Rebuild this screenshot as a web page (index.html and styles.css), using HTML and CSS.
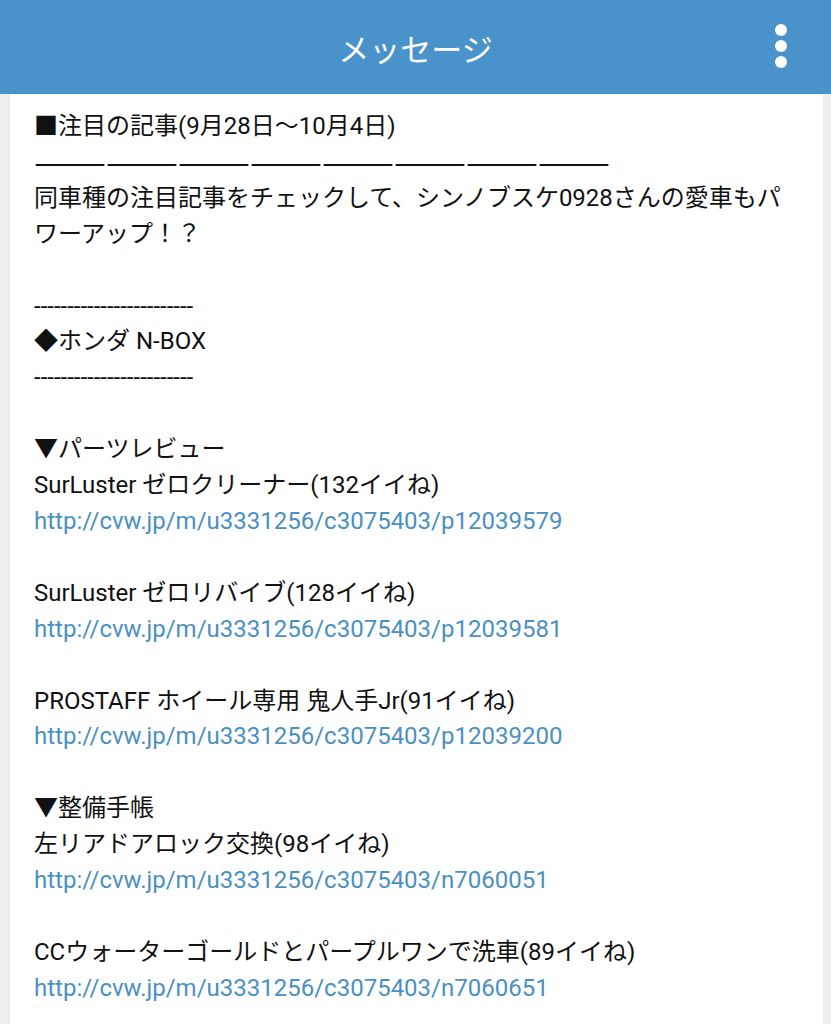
FILE: index.html
```html
<!DOCTYPE html>
<html>
<head>
  <meta charset="utf-8">
  <title>メッセージ</title>
  <link rel="stylesheet" href="styles.css">
</head>
<body>
  <div class="header">
    <h1 class="title">メッセージ</h1>
    <div class="menu">
      <span class="dot"></span>
      <span class="dot"></span>
      <span class="dot"></span>
    </div>
  </div>
  <div class="page">
    <div class="card">
      <p>■注目の記事(9月28日〜10月4日)</p>
      <p class="rule">――――――――――――――――――――――――</p>
      <p>同車種の注目記事をチェックして、シンノブスケ0928さんの愛車もパワーアップ！？</p>
      <p>&nbsp;</p>
      <p>------------------------</p>
      <p>◆ホンダ N-BOX</p>
      <p>------------------------</p>
      <p>&nbsp;</p>
      <p>▼パーツレビュー</p>
      <p>SurLuster ゼロクリーナー(132イイね)</p>
      <p><a href="#">http://cvw.jp/m/u3331256/c3075403/p12039579</a></p>
      <p>&nbsp;</p>
      <p>SurLuster ゼロリバイブ(128イイね)</p>
      <p><a href="#">http://cvw.jp/m/u3331256/c3075403/p12039581</a></p>
      <p>&nbsp;</p>
      <p>PROSTAFF ホイール専用 鬼人手Jr(91イイね)</p>
      <p><a href="#">http://cvw.jp/m/u3331256/c3075403/p12039200</a></p>
      <p>&nbsp;</p>
      <p>▼整備手帳</p>
      <p>左リアドアロック交換(98イイね)</p>
      <p><a href="#">http://cvw.jp/m/u3331256/c3075403/n7060051</a></p>
      <p>&nbsp;</p>
      <p>CCウォーターゴールドとパープルワンで洗車(89イイね)</p>
      <p><a href="#">http://cvw.jp/m/u3331256/c3075403/n7060651</a></p>
      <p>&nbsp;</p>
    </div>
  </div>
</body>
</html>
```

FILE: styles.css
```css
body {
  margin: 0;
  padding: 0;
  background-color: #eeeeee;
  font-family: Roboto, "Noto Sans CJK JP", sans-serif;
  color: #111;
}

.header {
  height: 94px;
  background-color: #4a93ca;
  display: flex;
  align-items: center;
  justify-content: center;
  position: relative;
}

.title {
  margin: 0;
  font-size: 31px;
  font-weight: normal;
  color: #fff;
}

.menu {
  position: absolute;
  right: 44px;
  top: 24px;
  display: flex;
  flex-direction: column;
  gap: 4px;
}

.dot {
  width: 12px;
  height: 12px;
  border-radius: 50%;
  background-color: #fff;
}

.page {
  padding: 0 8px 0 10px;
}

.card {
  background-color: #fff;
  padding: 15px 24px 0 24px;
  font-size: 24px;
  line-height: 35.9px;
}

.card p {
  margin: 0;
}

.rule {
  font-family: "Noto Sans CJK JP", sans-serif;
  white-space: nowrap;
  overflow: hidden;
  text-shadow: 0 1px 0 #111;
}

.card a {
  color: #4a90c2;
  text-decoration: none;
}
```
